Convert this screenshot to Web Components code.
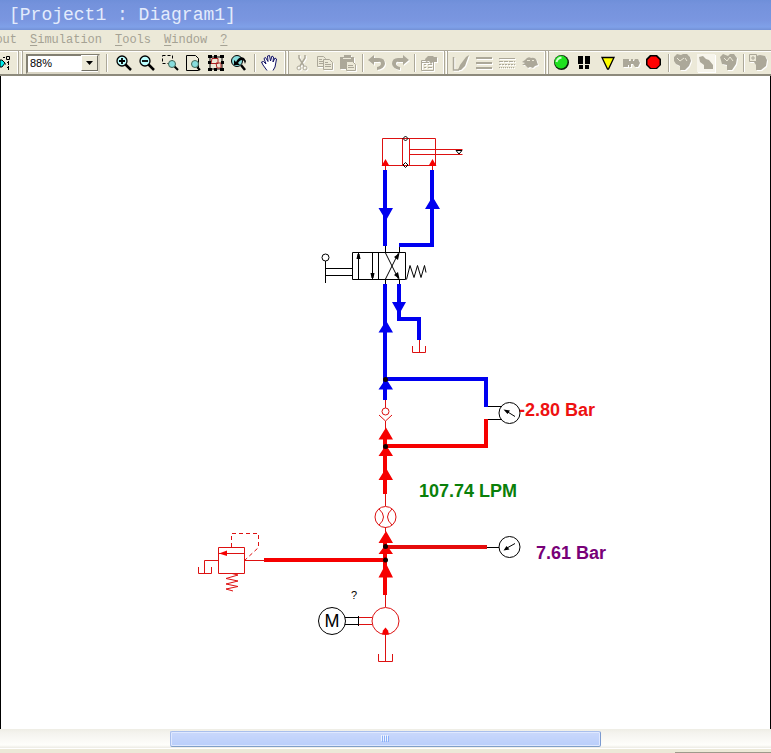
<!DOCTYPE html>
<html lang="en">
<head>
<meta charset="utf-8">
<title>[Project1 : Diagram1]</title>
<style>
  html, body { margin: 0; height: 100%; }
  body { font-family: "Liberation Sans", Arial, sans-serif; background: #ece9d8; overflow: hidden; }
</style>
</head>
<body>
<app-window></app-window>
<script>
const ICONS = {
  list: '<path d="M0 7h2l3 3-3 4H0z" fill="#0ee" stroke="#000"/><path d="M6.500 3.500h3v3h-3zM8.500 8v4M7 9.500h1.500M8.500 13v4M7 14.500h1.500M3 4.500h2M5 11h1" fill="none" stroke="#000"/>',
  zoomin: '<path d="M11.500 11.500l5.500 5.500" stroke="#000" stroke-width="2.500"/><circle cx="8" cy="8" r="5" fill="#bff" stroke="#000" stroke-width="1.300"/><path d="M5 8h6M8 5v6" stroke="#000" stroke-width="1.800"/>',
  zoomout: '<path d="M11.500 11.500l5.500 5.500" stroke="#000" stroke-width="2.500"/><circle cx="8" cy="8" r="5" fill="#bff" stroke="#000" stroke-width="1.300"/><path d="M5 8h6" stroke="#000" stroke-width="1.800"/>',
  zoomarea: '<path d="M2.500 2.500h10v8h-10z" fill="none" stroke="#000" stroke-dasharray="3 2"/><path d="M14 13l4 4" stroke="#000" stroke-width="2"/><circle cx="12" cy="11" r="3.500" fill="#8dd" stroke="#465"/>',
  zoompage: '<path d="M3.500 2.500h9l3 3v12h-12z" fill="none" stroke="#000"/><path d="M14 14l3 3" stroke="#000" stroke-width="2"/><circle cx="12" cy="11" r="3.500" fill="#8dd" stroke="#465"/>',
  zoomsel: '<path d="M4 4h12v12H4z" fill="none" stroke="#000"/><path d="M6 5.500h6v5H5zM10 10h5v5h-4z" fill="none" stroke="#a22"/><path d="M2 2h4v3H2zM8 2h3v3H8zM14 2h4v3h-4zM2 8h3v3H2zM15 8h3v3h-3zM2 15h4v3H2zM8 15h3v3H8zM14 15h4v3h-4z"/>',
  zoomback: '<path d="M12 12l4 5" stroke="#000" stroke-width="2.500"/><circle cx="8" cy="8" r="5.500" fill="#8dd" stroke="#000"/><path d="M5 12V7l2 2c2-4 5-6 8-4l2 3-1 3-1-3c-2-2-4-1-6 2l2 2z"/>',
  hand: '<path d="M7 17.500L3 12 1.500 9l2-.5L6 11 4 5.500l1.500-1L8 8.500 7.500 3 9.500 2.500l1 5.500L12 3l1.500 1L13 9l2-4 1.500 1-1.500 8-2 3.500" fill="#fff" stroke="#116"/>',
  cut: '<path d="M7 2v3l5 8M13 2v3l-5 8" fill="none" stroke="#aca899" stroke-width="1.500"/><circle cx="7" cy="15" r="2" fill="none" stroke="#aca899"/><circle cx="13" cy="15" r="2" fill="none" stroke="#aca899"/>',
  copy: '<g fill="#ece9d8" stroke="#aca899"><path d="M2.500 3.500h6l2 2v8h-8z"/><path d="M8.500 6.500h6l3 3v7h-9z"/><path d="M4 6.500h3M4 8.500h4M4 10.500h4M10 9.500h3M10 11.500h6M10 13.500h6"/></g>',
  paste: '<path d="M2 4h4V2h7v2h3v12H2z" fill="#aca899"/><path d="M8.500 8.500h6l3 3v6h-9z" fill="#ece9d8" stroke="#aca899"/><path d="M10 12.500h5M10 14.500h6" stroke="#aca899"/><path d="M5 5.500h8" stroke="#ece9d8"/>',
  undo: '<path d="M7 2v3h5q6 0 6 6-1 5-8 6v-3q4-1 4-3.500T11 9H7v3L1 7z" fill="#aca899"/>',
  redo: '<path d="M13 2v3H8q-6 0-6 6 1 5 8 6v-3q-4-1-4-3.500T9 9h4v3l6-5z" fill="#aca899"/>',
  props: '<path d="M2.500 7.500h12v10h-12z" fill="none" stroke="#aca899"/><path d="M5 11.500h2M9 11.500h4M5 14.500h2M9 14.500h4M3 9.500h7" stroke="#aca899"/><path d="M6 6l3-3h5l1 1h3v5h-4l-2 2-2-3-3 1z" fill="#aca899"/>',
  brush: '<path d="M2.500 4v13h5l4-5" fill="none" stroke="#aca899" stroke-width="1.500"/><path d="M18 2l-4 11-4 4H7l2-5 6-8z" fill="#aca899"/>',
  lines: '<path d="M2 5h16M2 10h16M2 15h16" stroke="#aca899" stroke-width="2"/>',
  dashes: '<path d="M2 5.500h16" stroke="#aca899"/><path d="M2 8.500h16" stroke="#aca899" stroke-dasharray="4 1"/><path d="M2 11.500h16" stroke="#aca899" stroke-dasharray="2 1"/><path d="M2 14.500h16" stroke="#aca899" stroke-dasharray="1 1"/>',
  blob: '<path d="M5 7q3-4 6-2 5-1 6 4l1 3-3 1-2 2-3-1-2 1-3-3H2l3-2-3-1z" fill="#aca899"/><path d="M7 7.500h3M12 7.500h2" stroke="#ece9d8"/>',
  run: '<circle cx="9.500" cy="9.500" r="7.500" fill="#0c1d0c"/><circle cx="9" cy="9" r="6.500" fill="#1fe01f"/><path d="M4.500 9q1-4 5-4.500" fill="none" stroke="#cfc" stroke-width="2"/>',
  pause: '<path d="M3 3h5v8H3zM4 12h4v4H4zM10 3h5v8h-5zM10 12h4v4h-4z"/>',
  step: '<path d="M4 4.500h12L10.500 16h-1z" fill="#ff0" stroke="#000" stroke-width="1.300"/>',
  next: '<path d="M2 6h6v2h2V6h2v2h1l1-2h3l2 4-2 4h-3l-2-3h-2v3H8v-2H7v2H2z" fill="#aca899"/>',
  stop: '<path d="M6 2h7l4 4v6l-4 4H6l-4-4V6z" fill="#000"/><path d="M7 3.500h5l3.500 3.500v5L12 15H7l-3.500-3.500V7z" fill="#f00"/>',
  piece1: '<path d="M1 4l3-3 4 1 2-1h4l3 3 1 4-2 5-4 4H7v-4l-4-2-2-3z" fill="#aca899"/><path d="M4 5l3 3 4-3M12 5l2 3" fill="none" stroke="#ece9d8"/>',
  piece2: '<path d="M1 1h18v18H1z" fill="#f7f5ec"/><path d="M3 4l4-1 3 3 3 1 4 5v4H8v-4L4 9z" fill="#aca899"/>',
  piece3: '<path d="M1 4l3-3 5 2 2-2h4l3 4-1 6-4 6H8v-5l-5-1z" fill="#aca899"/><path d="M5 5l3 3 3-4 3 4" fill="none" stroke="#ece9d8"/>',
  piece4: '<path d="M7 3l5-1 5 1 2 4-1 6-5 4H8v-5L6 9z" fill="#aca899"/><path d="M1.500 1.500h7v7h-7z" fill="#ece9d8" stroke="#aca899"/><path d="M3 5h4M5 3v4" stroke="#aca899"/>'
};

function define(name, css, html, setup) {
  customElements.define(name, class extends HTMLElement {
    constructor() {
      super();
      this.attachShadow({ mode: "open" }).innerHTML = `<style>${css}</style>${html}`;
    }
    connectedCallback() { if (setup) setup(this, this.shadowRoot); }
  });
}

define("title-bar", `
  :host { display: block; height: 30px; overflow: hidden; padding-left: 9px; box-sizing: border-box;
    background: linear-gradient(#6f8fd9 0, #7492dc 4px, #7a96e0 20px, #7fa0e8 27px, #7391d6 30px); }
  h1 { margin: 0; font: 18px/30px "Liberation Mono", monospace; color: #e3ebfc; white-space: pre; }`,
  `<h1><slot></slot></h1>`);

define("menu-bar", `
  :host { display: flex; align-items: center; gap: 13px; height: 20px; overflow: hidden; background: #ece9d8; }`,
  `<slot></slot>`);

define("menu-item", `
  :host { display: flex; justify-content: flex-end; }
  :host([clipped]) { width: 17px; }
  button { all: unset; font: 12px/16px "Liberation Mono", monospace; color: #a5a294; white-space: pre; }
  ::slotted(u) { text-underline-offset: 2px; }`,
  `<button><slot></slot></button>`);

define("tool-bar", `
  :host { display: flex; align-items: center; height: 26px; box-sizing: border-box; overflow: hidden;
    background: #ece9d8; border-top: 1px solid #aca899; border-bottom: 2px solid #8d8a7c; box-shadow: inset 0 1px #fff; }`,
  `<slot></slot>`);

define("tool-button", `
  :host { display: block; flex: 0 0 23px; height: 22px; }
  :host([clipped]) { flex-basis: 12px; overflow: hidden; }
  button { all: unset; display: grid; place-items: center; width: 23px; height: 22px; }
  :host([clipped]) button { place-items: center start; }
  svg { width: 20px; height: 20px; overflow: hidden; }
  :host([off]) svg { filter: drop-shadow(1px 1px 0 #fff); }`,
  `<button></button>`,
  (el, root) => {
    const b = root.querySelector("button");
    b.setAttribute("aria-label", el.getAttribute("label"));
    b.innerHTML = `<svg viewBox="0 0 20 20">${ICONS[el.getAttribute("icon")]}</svg>`;
  });

define("tool-sep", `
  :host { display: grid; place-items: center; flex: 0 0 6px; height: 18px; }
  :host([wide]) { flex-basis: 8px; }
  :host([wider]) { flex-basis: 12px; }
  i { width: 1px; height: 18px; background: #aca899; box-shadow: 1px 0 #fff; }`, `<i></i>`);

define("tool-grip", `
  :host { display: flex; justify-content: center; gap: 2px; flex: 0 0 9px; height: 23px; }
  :host([wide]) { flex-basis: 14px; gap: 3px; }
  i { width: 1px; background: #fff; box-shadow: 1px 0 #aca899; }`, `<i></i><i></i>`);

define("zoom-box", `
  :host { display: block; position: relative; flex: 0 0 74px; height: 20px; }
  select { appearance: none; width: 100%; height: 100%; box-sizing: border-box; margin: 0; padding: 0 0 1px 2px;
    border: 2px solid; border-color: #827f72 #d9d5c5 #d9d5c5 #827f72; border-radius: 0; background: #fff; color: #000;
    font: 11px/15px "Liberation Sans", Arial, sans-serif; }
  span { position: absolute; right: 2px; top: 2px; bottom: 2px; width: 17px; box-sizing: border-box; pointer-events: none;
    display: grid; place-items: center; background: #ece9d8; border: 1px solid; border-color: #fff #716f64 #716f64 #fff; }
  svg { width: 7px; height: 4px; }`,
  `<select aria-label="Zoom"><option>88%</option></select><span><svg viewBox="0 0 7 4"><path d="M0 0h7L3.500 4z"/></svg></span>`);

define("scroll-bar", `
  :host { display: block; height: 19px; box-sizing: border-box; padding: 2px 0 1px; background: linear-gradient(#eeede5, #f4f3ee 4px, #fefefb 16px, #ecebe4); }
  div { display: grid; grid-template-columns: repeat(4, 1px); gap: 1px; place-content: center; margin-left: 22%; width: 56%; height: 16px;
    box-sizing: border-box; border: 1px solid #a9bfec; border-bottom: 1px solid #7f9fc8; border-right-color: #7b9ad0; border-radius: 2px;
    box-shadow: inset 0 0 0 1px #dfe8ff; background: linear-gradient(#cad8fb, #b9cefb); }
  i { height: 6px; background: #8cb0f8; box-shadow: -1px -1px #eef4fe; }`,
  `<div role="scrollbar" aria-label="Horizontal scroll" aria-orientation="horizontal" aria-valuenow="50"><i></i><i></i><i></i><i></i></div>`);

define("status-bar", `
  :host { display: flex; justify-content: flex-end; align-items: flex-end; height: 5px; background: #ece9d8; box-shadow: inset 0 1px #fff; }
  i { width: 96px; height: 1px; background: #9d9a8b; }`, `<i></i>`);

define("hydraulic-diagram", `
  :host { display: flex; flex: 1; min-height: 0; background: #fff; border: solid #000; border-width: 0 1px; }
  svg { width: 100%; height: 100%; }
  .r { fill: none; stroke: #d11; } .k { fill: none; stroke: #000; }
  .B { fill: none; stroke: #0000f0; stroke-width: 4; } .R { fill: none; stroke: #f60000; stroke-width: 4; }
  .b { fill: #0000f0; } .f { fill: #f60000; }
  text { font: bold 18px "Liberation Sans", Arial, sans-serif; }
  .small { font: 11px "Liberation Sans", Arial, sans-serif; } .motor { font: 18px "Liberation Sans", Arial, sans-serif; }`,
  `<svg viewBox="1 76 769 653" preserveAspectRatio="xMinYMin meet" role="img" aria-label="Hydraulic circuit">
  <!-- cylinder -->
  <path class="r" d="M382.500 138.500h53v27h-53zM402.500 138.500v27M409.500 138.500v27M409.500 149.500h53M409.500 154.500h53M385.500 165v6M432.500 165v6"/>
  <path class="f" d="M381.500 166h8l-4-7zM428.500 166h8l-4-7z"/>
  <path class="k" d="M403 138.500l2.500-2.500 2.500 2.500-2.500 2.500zM403 165l2.500-2.500 2.500 2.500-2.500 2.500zM456 150.500h6l-3 3.500z"/>
  <!-- working lines -->
  <path class="B" d="M385 170v76M432 170v75h-33M385 284v116M399 284v35h20v21M385 379h101v28"/>
  <path class="b" d="M378.500 208h14.500l-7 12.500zM425 209h15l-7.500-12.500zM378.500 332.500h14.500l-7-12zM392 302h14l-7 12.500zM378.500 389.500h14.500l-7-11z"/>
  <!-- directional valve -->
  <path class="k" d="M352.500 252.500h53v27h-53zM378.500 252.500v27M358.500 253v26M372.500 253v26M385.500 246v6M399.500 247v5M385.500 279v5M399.500 279v5M385.500 253l13 26M385.500 279l13-26M406.500 279.500l3.500-14 4 12 3.500-12 3.500 12 3.500-12 1.500 7M325.500 261v22M326 268.500h26M326 275.500h26"/>
  <path d="M356.500 259h4l-1-5h-2zM370.500 273h4l-1 5h-2zM394 257l4 3 1.500-7zM394 275l4-3 1.500 7z"/>
  <circle class="k" cx="325.500" cy="257.500" r="3.500"/>
  <path class="r" d="M419.500 340v12M412.500 346v6.500h13v-6.500"/>
  <!-- check valve -->
  <path class="r" d="M385.500 400v8M379 415l6.500 6 6.500-6M385.500 421v8M385.500 494v12M385.500 527v5M385.500 594v13"/>
  <circle class="r" cx="385.500" cy="411.500" r="3.500"/>
  <!-- supply lines -->
  <path class="R" d="M385 436v58M385 446h101v-27M385 538v57M264 560h121"/>
  <path class="R" style="stroke:#e50c0c" d="M385 547h102"/>
  <path class="f" d="M378.500 439.500h14.500l-7-12zM378.500 456h14.500l-7-11zM378.500 480h14.500l-7-12zM378.500 543h14.500l-7-12zM378.500 554h14.500l-7-10zM378.500 577.500h14.500l-7-14z"/>
  <g fill="#100000"><circle cx="385.500" cy="379.500" r="2.500"/><circle cx="385.500" cy="446.500" r="2.500"/><circle cx="385.500" cy="546.500" r="2.500"/><circle cx="385.500" cy="560" r="2.500"/></g>
  <!-- gauges and flow meter -->
  <circle class="k" cx="509.500" cy="413" r="10.500"/><circle class="k" cx="509.500" cy="547" r="10.500"/>
  <path class="k" d="M488 406.500h14M488 419.500h14M487 547.500h12M515 416.500l-8-5M515 543.500l-8 4.500"/>
  <path d="M503.500 409.500l6.500 1-2.500 3.500zM503.500 550.500l3-4.500 3 3.500z"/>
  <circle class="r" cx="385.500" cy="517" r="10.500"/>
  <path class="r" d="M379 509q9 8 0 16M392 509q-9 8 0 16"/>
  <!-- relief valve -->
  <path class="r" d="M218.500 547.500h26v26h-26zM219 553.500h25M218 560.500h-13.500v13M198.500 567v6.500h13v-6.500M244 560.500h21M232 573.500l6 1.500-12 3.500 12 2.500-12 3 12 2.500-12 2.500 7 2"/>
  <path class="r" stroke-dasharray="4 3" d="M231.500 547v-13.500h27v14l-14 13"/>
  <path class="f" d="M219 553.500l8-3v5.500z"/>
  <!-- motor and pump -->
  <circle class="k" cx="332" cy="621" r="13.500"/><circle class="r" cx="385.500" cy="621" r="13.500"/>
  <path class="k" d="M345 617.500h14M345 624.500h14M358.500 616v10"/>
  <path class="r" d="M359 617.500h13M359 624.500h13M385.500 634v27M378.500 654v7.500h14v-7.500"/>
  <path class="f" d="M382 634.500h7l-1-4-2.500-3-2.500 3z"/>
  <text class="motor" x="332" y="627" text-anchor="middle">M</text>
  <text class="small" x="351" y="599">?</text>
  <text x="519" y="416" fill="#ee1111">-2.80 Bar</text>
  <text x="419" y="497" fill="#0a800a">107.74 LPM</text>
  <text x="536" y="559" fill="#780078">7.61 Bar</text>
  </svg>`);

const btn = (icon, label, extra = "") => `<tool-button icon="${icon}" label="${label}" ${extra}></tool-button>`;
define("app-window", `
  :host { display: flex; flex-direction: column; height: 100vh; }
  title-bar, menu-bar, tool-bar, scroll-bar, status-bar { flex: none; }`,
  `<title-bar>[Project1 : Diagram1]</title-bar>
  <menu-bar><menu-item clipped>out</menu-item><menu-item><u>S</u>imulation</menu-item><menu-item><u>T</u>ools</menu-item><menu-item><u>W</u>indow</menu-item><menu-item><u>?</u></menu-item></menu-bar>
  <tool-bar>${btn("list", "Ports", "clipped")}<tool-grip wide></tool-grip><zoom-box></zoom-box><tool-sep wider></tool-sep>
  ${btn("zoomin", "Zoom in")}${btn("zoomout", "Zoom out")}${btn("zoomarea", "Zoom area")}${btn("zoompage", "Zoom page")}${btn("zoomsel", "Zoom selection")}${btn("zoomback", "Previous zoom")}<tool-sep wide></tool-sep>${btn("hand", "Pan")}<tool-grip></tool-grip>
  ${btn("cut", "Cut", "off")}${btn("copy", "Copy", "off")}${btn("paste", "Paste", "off")}<tool-sep></tool-sep>${btn("undo", "Undo", "off")}${btn("redo", "Redo", "off")}<tool-sep></tool-sep>${btn("props", "Properties", "off")}<tool-grip></tool-grip>
  ${btn("brush", "Line colour", "off")}${btn("lines", "Line width", "off")}${btn("dashes", "Line style", "off")}${btn("blob", "Fill", "off")}<tool-grip></tool-grip>
  ${btn("run", "Run")}${btn("pause", "Pause")}${btn("step", "Slow motion")}${btn("next", "Step", "off")}${btn("stop", "Stop")}<tool-sep></tool-sep>${btn("piece1", "Group", "off")}${btn("piece2", "Ungroup", "off")}${btn("piece3", "Order", "off")}<tool-sep></tool-sep>${btn("piece4", "Add component", "off")}</tool-bar>
  <hydraulic-diagram></hydraulic-diagram>
  <scroll-bar></scroll-bar>
  <status-bar></status-bar>`);
</script>
</body>
</html>
